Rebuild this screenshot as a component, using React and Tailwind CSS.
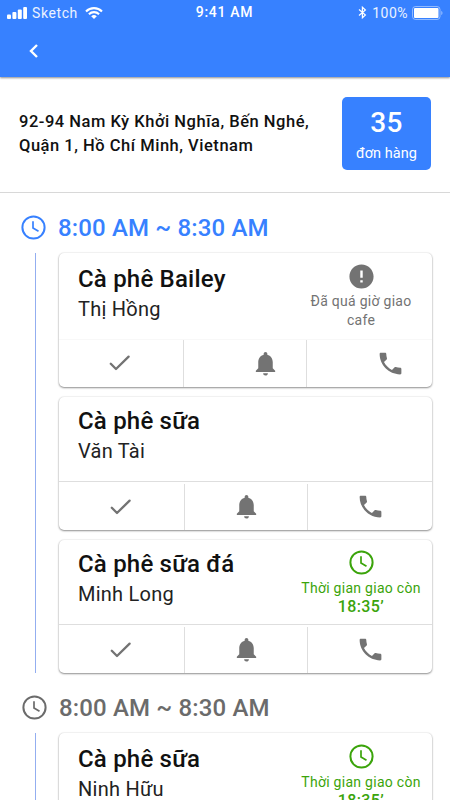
import { MdError, MdNotifications, MdPhone } from 'react-icons/md';

const GROUPS = [
  {
    id: 1,
    time: '8:00 AM ~ 8:30 AM',
    active: true,
    orders: [
      { id: 1, drink: 'Cà phê Bailey', customer: 'Thị Hồng', late: true },
      { id: 2, drink: 'Cà phê sữa', customer: 'Văn Tài' },
      { id: 3, drink: 'Cà phê sữa đá', customer: 'Minh Long', remaining: '18:35’' },
    ],
  },
  {
    id: 2,
    time: '8:00 AM ~ 8:30 AM',
    active: false,
    orders: [
      { id: 4, drink: 'Cà phê sữa', customer: 'Ninh Hữu', remaining: '18:35’' },
    ],
  },
];

function ClockIcon() {
  return (
    <svg width="25" height="25" viewBox="0 0 25 25" fill="none" stroke="currentColor">
      <circle cx="12.5" cy="12.5" r="11.1" strokeWidth="2" />
      <path d="M12 6.3v6.6l5.5 3.3" strokeWidth="1.7" />
    </svg>
  );
}

function CheckIcon() {
  return (
    <svg width="22" height="16" viewBox="0 0 22 16" fill="none" stroke="currentColor" strokeWidth="2.3" strokeLinecap="round" strokeLinejoin="round">
      <path d="m1.8 8.8 5.2 5.2L19.6 1.6" />
    </svg>
  );
}

function StatusBar() {
  return (
    <div className="grid grid-cols-3 items-center h-[25px] pl-[7px] pr-[6px] text-white">
      <div className="flex items-center">
        <svg width="20" height="12" viewBox="0 0 20 12" fill="currentColor">
          <rect x="0" y="7.5" width="4" height="4.5" rx="1" />
          <rect x="5.4" y="5" width="4" height="7" rx="1" />
          <rect x="10.8" y="2.5" width="4" height="9.5" rx="1" />
          <rect x="16.2" y="0" width="3.8" height="12" rx="1" />
        </svg>
        <span className="ml-[5px] text-[14px] leading-none tracking-[0.6px] text-white/90">Sketch</span>
        <svg className="ml-[7px]" width="18" height="12" viewBox="0 0 18 12" fill="none" stroke="currentColor" strokeWidth="2.1">
          <path d="M1 4.4a11.4 11.4 0 0 1 16 0" />
          <path d="M3.9 7.2a7.4 7.4 0 0 1 10.2 0" />
          <path d="M9 12 6.2 9.3a4 4 0 0 1 5.6 0z" fill="currentColor" stroke="none" />
        </svg>
      </div>
      <div className="pr-[2px] -mt-[2px] text-center text-[14px] leading-none font-medium tracking-[0.7px] whitespace-nowrap">9:41 AM</div>
      <div className="flex items-center justify-end">
        <svg width="9" height="13" viewBox="0 0 9 13" fill="none" stroke="currentColor" strokeWidth="1.2">
          <path d="M1 3.5 7.4 9 4.4 11.8V1.2L7.4 4 1 9.5" />
        </svg>
        <span className="ml-[5px] text-[14px] leading-none tracking-[0.5px] text-white/90">100%</span>
        <svg className="ml-[4px]" width="32" height="14" viewBox="0 0 32 14">
          <rect x="0.5" y="0.5" width="27.5" height="13" rx="3" fill="none" stroke="#fff" strokeOpacity="0.45" />
          <rect x="2" y="2" width="24.5" height="10" rx="1" fill="#fff" />
          <path d="M29.3 4.8c1.6.7 1.6 3.7 0 4.4z" fill="#fff" fillOpacity="0.5" />
        </svg>
      </div>
    </div>
  );
}

function OrderStatus({ order }) {
  if (order.late) {
    return (
      <div className="flex flex-col items-center w-[120px] -mt-[1px] text-[#737373]">
        <MdError className="w-[29px] h-[29px] -mt-[1px]" />
        <p className="mt-[1px] text-[14px] leading-[19px] text-center tracking-[0.28px]">Đã quá giờ giao cafe</p>
      </div>
    );
  }
  if (order.remaining) {
    return (
      <div className="flex flex-col items-center w-[124px] text-[#3ba40b]">
        <ClockIcon />
        <p className="mt-1 text-[14px] leading-[19px] text-center tracking-[0.28px] whitespace-nowrap">{'Thời gian giao còn'}</p>
        <p className="text-base leading-[18px] font-medium tracking-[0.4px]">{order.remaining}</p>
      </div>
    );
  }
  return null;
}

function OrderCard({ order, first }) {
  // the overdue card has a softer divider and its last two actions sit further right
  const shifted = order.late;
  return (
    <div className={`rounded-[5px] bg-white overflow-hidden shadow-[0_1px_2px_rgba(0,0,0,0.42),0_0_2px_rgba(0,0,0,0.14)] ${shifted ? 'h-[134px]' : 'h-[133px]'}`}>
      <div className={`flex justify-between pl-[19.5px] border-b ${first ? 'pt-[11px]' : 'pt-[9px]'} ${shifted ? 'h-[87px] border-[#f8f8f8] pr-[11px]' : 'h-[85px] border-[#dedede] pr-[9px]'}`}>
        <div>
          <h2 className="text-2xl leading-[30px] font-medium tracking-[0.2px] text-[#111] whitespace-nowrap">{order.drink}</h2>
          <p className="text-xl leading-[30px] tracking-[0.25px] text-[#222] whitespace-nowrap">{order.customer}</p>
        </div>
        <div className={first ? '' : 'pt-[1px]'}>
          <OrderStatus order={order} />
        </div>
      </div>
      <div className={`flex text-[#737373] ${shifted ? 'h-[47px]' : 'h-12 pt-[2px]'}`}>
        <button className={`flex items-center justify-center border-r border-[#dedede] pb-[1px] ${shifted ? 'w-[125px] pr-[2px]' : 'w-[126px]'}`}>
          <CheckIcon />
        </button>
        <button className={`flex items-center justify-center border-r border-[#dedede] pb-[1px] ${shifted ? 'w-[123px] pl-[41px]' : 'w-[123px] pl-[1px]'}`}>
          <MdNotifications className="w-[29px] h-[29px]" />
        </button>
        <button className={`flex flex-1 items-center justify-center pb-[1px] ${shifted ? 'pl-[42px]' : 'pl-[2px]'}`}>
          <MdPhone className="w-[29px] h-[29px]" />
        </button>
      </div>
    </div>
  );
}

function TimeGroup({ group }) {
  return (
    <section>
      <div className={`flex items-center h-[60px] pb-2 pt-[17px] ${group.active ? 'pl-[21px] text-[#3781ff]' : 'pl-[22px] text-[#6b6b6b]'}`}>
        <ClockIcon />
        <span className="ml-3 text-2xl leading-7 font-medium tracking-[0.15px]">{group.time}</span>
      </div>
      <div className="flex pl-[35px] pr-[18px]">
        <div className="w-px mr-[22.5px] bg-[#93aef0]" />
        <div className="flex flex-1 flex-col gap-[10px]">
          {group.orders.map((o, i) => <OrderCard key={o.id} order={o} first={i === 0} />)}
        </div>
      </div>
    </section>
  );
}

export default function App() {
  return (
    <div className="h-[800px] w-[450px] overflow-hidden bg-white font-[Roboto,sans-serif]">
      <header className="relative h-[77px] bg-[#3781ff] shadow-[0_1px_2px_rgba(0,0,0,0.45)]">
        <StatusBar />
        <button className="flex ml-[29px] mt-[19px] text-white">
          <svg width="10" height="14" viewBox="0 0 10 14" fill="none" stroke="currentColor" strokeWidth="2.4">
            <path d="M8 1 2 7l6 6" />
          </svg>
        </button>
      </header>

      <div className="flex items-start justify-between h-[116px] pl-[19px] pr-[19px] pt-5 border-b border-[#d8d8d8]">
        <p className="mt-[13px] text-[16.5px] leading-6 font-medium tracking-[0.52px] text-[#111] whitespace-nowrap">
          92-94 Nam Kỳ Khởi Nghĩa, Bến Nghé,
          <br />
          Quận 1, Hồ Chí Minh, Vietnam
        </p>
        <div className="flex flex-col items-center w-[89px] h-[73px] rounded-[5px] bg-[#3781ff] text-white">
          <span className="mt-2 text-[28px] leading-9 font-medium tracking-[0.3px]">35</span>
          <span className="mt-[3px] text-[14.5px] leading-5 tracking-[0.05px]">đơn hàng</span>
        </div>
      </div>

      {GROUPS.map(g => <TimeGroup key={g.id} group={g} />)}
    </div>
  );
}
